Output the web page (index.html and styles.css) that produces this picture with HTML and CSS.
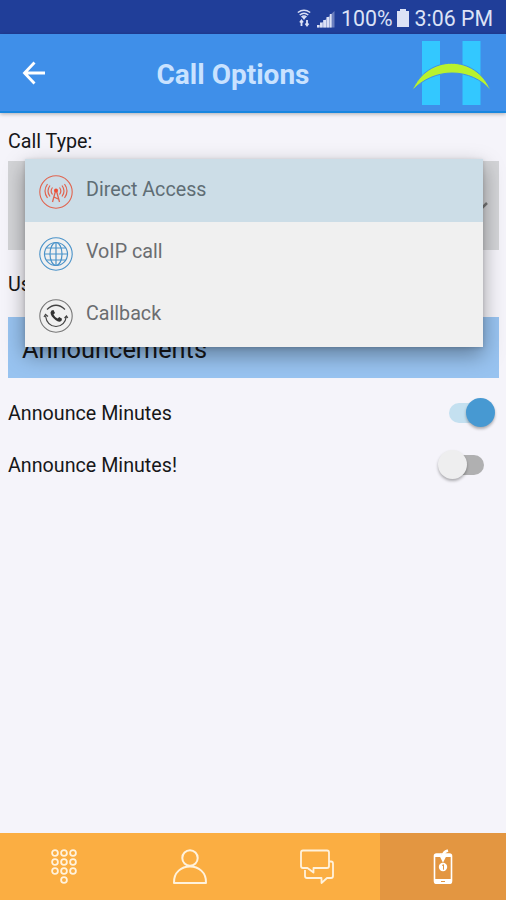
FILE: index.html
```html
<!DOCTYPE html>
<html lang="en">

<head>
  <meta charset="UTF-8">
  <meta name="viewport" content="width=device-width, initial-scale=1">
  <title>Call Options</title>
  <link rel="stylesheet" href="styles.css">
</head>

<body>
  <div class="app">
    <div class="status-bar">
      <svg class="wifi" width="14" height="18" viewBox="0 0 14 18" fill="none" stroke="currentColor">
        <path d="M.8 3.5Q7 -1 13.2 3.5M2.7 6Q7 2.5 11.3 6M4.500 8Q7 6 9.500 8" stroke-width="1.500" />
        <path d="M4.500 7.500h5L7 11z" fill="currentColor" stroke="none" />
        <path d="M4.500 17v-5M3 13.500l1.500-2 1.500 2M10 11v5M8.500 14.500l1.500 2 1.500-2" stroke-width="1.800" />
      </svg>
      <svg class="signal" width="18" height="18" viewBox="0 0 18 18" fill="currentColor">
        <path d="M0 17.500h2.500v-2.500H0zM3 17.500h2.700v-5H3zM6.200 17.500h2.800V10H6.200zM9.500 17.500h2.800V7H9.500zM12.800 17.500h1.800V4h-1.800z" />
        <path d="M0 17.500L17.500 1v16.500z" opacity=".4" />
      </svg>
      <span class="percent">100%</span>
      <svg class="battery" width="12" height="18" viewBox="0 0 12 18" fill="currentColor">
        <path d="M3 0h6v2H12v16H0V2h3z" />
      </svg>
      <span>3:06 PM</span>
    </div>

    <header class="header">
      <svg class="back" width="24" height="24" viewBox="0 0 24 24" fill="none" stroke="#fff" stroke-width="2.800">
        <path d="M12.500 1.500L2.500 12l10 10.500M2.500 12H23" />
      </svg>
      <h1>Call Options</h1>
      <svg class="logo" width="78" height="64" viewBox="0 0 78 64">
        <path d="M9 0h18v64H9zM49.500 0h18v64h-18z" fill="#33c8ff" />
        <path d="M-1 50C14 13 63 13 78 50 59 26 20 26 -1 50z" fill="#b9f22e" stroke="#3f8fe9" stroke-width="1" />
      </svg>
    </header>

    <main class="content">
      <div class="label">Call Type:</div>
      <div class="select-wrap">
        <div class="select">
          <svg width="12" height="8" viewBox="0 0 12 8" fill="none" stroke="#777" stroke-width="2.500">
            <path d="M1 1l5 5 5-5" />
          </svg>
        </div>

        <ul class="menu">
          <li class="selected">
            <svg class="option-icon" width="34" height="34" viewBox="0 0 34 34" fill="none" stroke="#e0644f">
              <circle cx="17" cy="17" r="16.200" stroke-width="1.100" />
              <path d="M13.500 12.500Q10.800 16 13.500 19.500M11 10.500Q7 16 11 21.500M8.500 9Q3.500 16 8.500 23M20.500 12.500Q23.200 16 20.500 19.500M23 10.500Q27 16 23 21.500M25.500 9Q30.500 16 25.500 23" stroke-width="1.200" />
              <path d="M16.500 16l-3 11M17.500 16l3 11M15 22l4 2" stroke-width="1.300" />
              <circle cx="17" cy="15.500" r="2" fill="#ee4b32" stroke="none" />
            </svg>
            <span>Direct Access</span>
          </li>
          <li>
            <svg class="option-icon" width="34" height="34" viewBox="0 0 34 34" fill="none" stroke="#4b93c9">
              <circle cx="17" cy="17" r="16.200" stroke-width="1.100" />
              <g stroke-width="1.200">
                <circle cx="17" cy="17" r="11.500" />
                <ellipse cx="17" cy="17" rx="6" ry="11.500" />
                <path d="M17 5.500v23M5.500 17h23M7.500 11h19M7.500 23h19" />
              </g>
            </svg>
            <span>VoIP call</span>
          </li>
          <li>
            <svg class="option-icon" width="34" height="34" viewBox="0 0 34 34" fill="none" stroke="#444">
              <circle cx="17" cy="17" r="16.200" stroke="#777" stroke-width="1.100" />
              <path d="M8 10.500Q17 2 26 10.500M6.500 17Q8 27 17 27.500 26 27 27.500 17M5 18l1.500-2.500 2.500 2M25.500 19l2-2 1.300 2" stroke-width="1.200" />
              <path d="M12.500 11.500l2-.5 1.500 3-1.500 1.500q1.500 3 4 4l1.800-1.500 2.700 1.800-.5 2q-2.500 2-6-.8-5-4-5-7.500z" fill="#333" stroke="none" />
            </svg>
            <span>Callback</span>
          </li>
        </ul>
      </div>

      <div class="label user-label">Us</div>
      <h2>Announcements</h2>

      <div class="setting">
        <span>Announce Minutes</span>
        <span class="switch on"></span>
      </div>
      <div class="setting">
        <span>Announce Minutes!</span>
        <span class="switch"></span>
      </div>
    </main>

    <nav class="tabs">
      <a class="tab">
        <svg width="26" height="36" viewBox="0 0 26 36" fill="none" stroke="#fff2dc" stroke-width="1.800">
          <circle cx="4" cy="4" r="2.900" />
          <circle cx="13" cy="4" r="2.900" />
          <circle cx="22" cy="4" r="2.900" />
          <circle cx="4" cy="13" r="2.900" />
          <circle cx="13" cy="13" r="2.900" />
          <circle cx="22" cy="13" r="2.900" />
          <circle cx="4" cy="22" r="2.900" />
          <circle cx="13" cy="22" r="2.900" />
          <circle cx="22" cy="22" r="2.900" />
          <circle cx="13" cy="31" r="2.900" />
        </svg>
      </a>
      <a class="tab">
        <svg width="36" height="36" viewBox="0 0 36 36" fill="none" stroke="#fff2dc" stroke-width="2">
          <circle cx="18" cy="9" r="7.700" />
          <path d="M2 34C1 12 35 12 34 34z" stroke-linejoin="round" />
        </svg>
      </a>
      <a class="tab">
        <svg width="34" height="36" viewBox="0 0 34 36" fill="none" stroke="#fff2dc" stroke-width="1.800" stroke-linejoin="round">
          <path d="M3 1.500h24q2 0 2 2V17q0 2-2 2H13.500v4.500L7.500 19H3q-2 0-2-2V3.500q0-2 2-2z" />
          <path d="M29 12.500h2q2 0 2 2V27q0 2-2 2h-4l-5.500 5V29H7q-2 0-2-2v-6" />
        </svg>
      </a>
      <a class="tab active">
        <svg width="20" height="36" viewBox="0 0 20 36" fill="none" stroke="#fff" stroke-width="1.600">
          <rect x="1.500" y="5" width="17" height="29" rx="2" />
          <path d="M1 30h18v3q0 2-2 2H3q-2 0-2-2zM2 5h6v3H2zM12 5h6v3h-6z" fill="#fff" stroke="none" />
          <path d="M8 32.500h4" stroke="#e39641" stroke-width="1" />
          <path d="M10 11V7q0-4 5-5.500M7 5l3 6 3-6" stroke-width="2.500" />
          <circle cx="10" cy="18" r="4.200" fill="#fff" stroke="none" />
          <path d="M9 16.500l1.500-.8v5" stroke="#e39641" stroke-width="1" />
        </svg>
      </a>
    </nav>
  </div>
</body>

</html>
```
FILE: styles.css
```css
* {
  box-sizing: border-box;
}

body {
  margin: 0;
  background: #f5f4fa;
  color: #171719;
  font-family: Roboto, "Liberation Sans", sans-serif;
  font-size: 19.7px;
}

.app {
  display: flex;
  flex-direction: column;
  height: 900px;
  overflow: hidden;
}

.status-bar {
  display: flex;
  align-items: center;
  justify-content: flex-end;
  height: 34px;
  padding: 3px 13px 0 0;
  background: #203e99;
  color: #dce2f6;
  font-size: 21.3px;
}

.wifi {
  margin-top: -2px;
}

.signal {
  margin: 0 6px;
}

.battery {
  margin: -2px 6px 0 4px;
}

.header {
  display: flex;
  align-items: center;
  height: 79px;
  padding: 1px 15px 0 22px;
  background: #3f8fe9;
  border-bottom: 2px solid #1986df;
  box-shadow: 0 1px 4px rgba(0, 0, 0, 0.3);
}

.header h1 {
  flex: 1;
  margin: 0;
  padding: 3px 0 0 7px;
  color: #c9e2ff;
  font-size: 28px;
  font-weight: 700;
  text-align: center;
}

.logo {
  overflow: visible;
}

.content {
  flex: 1;
  padding: 16px 7px 0 8px;
}

.label {
  height: 32px;
  line-height: 26px;
}

.select-wrap {
  position: relative;
}

.select {
  display: flex;
  align-items: center;
  justify-content: flex-end;
  height: 89px;
  padding-right: 11px;
  background: #d3d4d7;
}

/* opens on top of the select and the rows below it */
.menu {
  position: absolute;
  top: -2px;
  left: 17px;
  width: 458px;
  margin: 0;
  padding: 0;
  list-style: none;
  background: #f0f0f0;
  color: #6b6d70;
  box-shadow: 0 8px 20px rgba(0, 0, 0, 0.36), 0 1px 4px rgba(0, 0, 0, 0.15);
}

.menu li {
  display: flex;
  align-items: center;
  height: 62px;
  padding: 2px 14px 0;
}

.menu li.selected {
  height: 63px;
  background: #ccdde7;
  color: #5f6d75;
}

.menu li:last-child {
  height: 63px;
  padding-top: 1px;
}

.menu li span {
  margin: -5px 0 0 13px;
}

.user-label {
  height: 67px;
  padding-top: 22px;
}

.content h2 {
  height: 61px;
  margin: 0 0 9px;
  padding-left: 14px;
  background: #98c3f0;
  font-size: 25.4px;
  font-weight: 400;
  line-height: 65px;
}

.setting {
  display: flex;
  align-items: center;
  justify-content: space-between;
  height: 52px;
}

.switch {
  display: flex;
  align-items: center;
  width: 35px;
  height: 20px;
  margin: -1px 15px 0 0;
  border-radius: 10px;
  background: #b0b0b1;
}

.switch::before {
  content: "";
  flex: none;
  width: 29px;
  height: 29px;
  margin-left: -11px;
  border-radius: 50%;
  background: #eeeeef;
  box-shadow: 0 2px 3px rgba(0, 0, 0, 0.3);
}

.switch.on {
  background: #c4e0f0;
}

.switch.on::before {
  margin-left: 17px;
  background: #4799d2;
}

.tabs {
  display: grid;
  grid-template-columns: 127px 126px 127px 126px;
  height: 67px;
  background: #fbae42;
}

.tab {
  display: flex;
  align-items: center;
  justify-content: center;
}

.tab.active {
  background: #e39641;
}
```
